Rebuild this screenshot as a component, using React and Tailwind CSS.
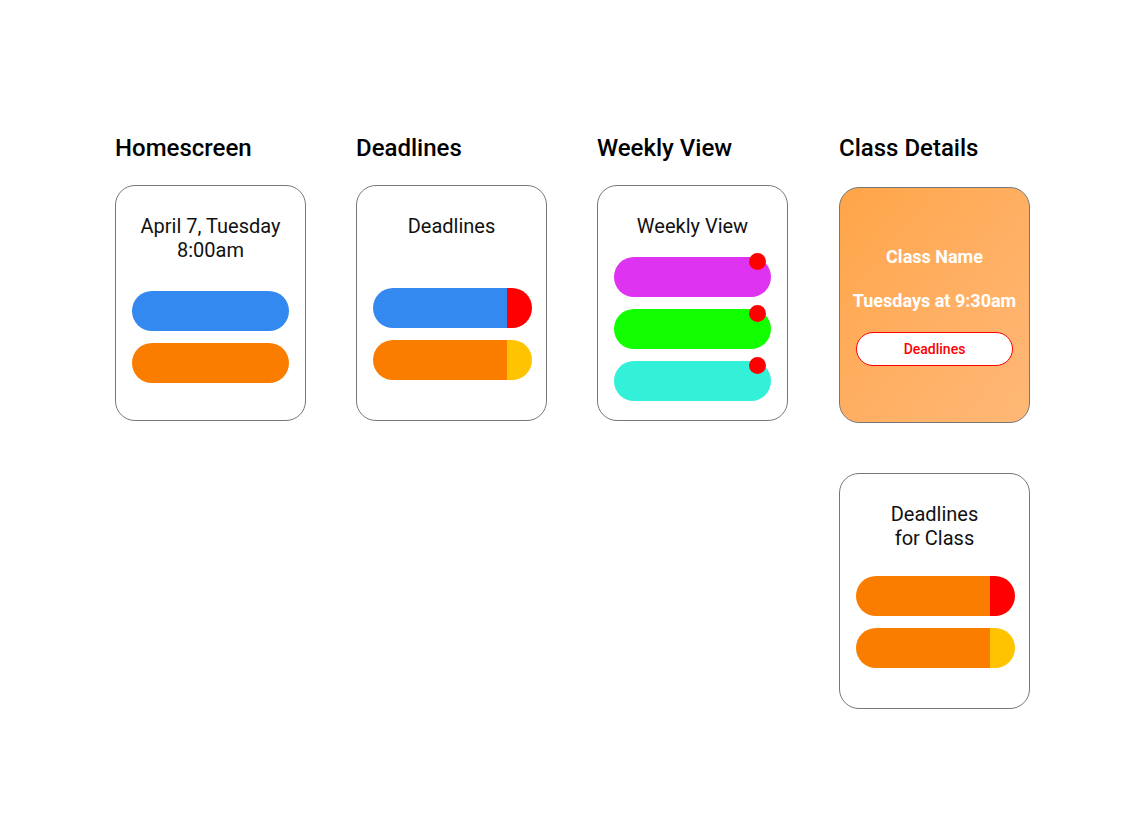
import React from "react";

const font = { fontFamily: "Roboto, 'Liberation Sans', sans-serif" };

function Heading({ children }) {
  return (
    <h2 className="text-[24px] font-medium leading-[28px] text-black h-[28px] mb-[23px] whitespace-nowrap">
      {children}
    </h2>
  );
}

function Card({ children, className = "" }) {
  return (
    <div
      className={`w-[191px] h-[236px] rounded-[20px] border border-[#777777] bg-white flex flex-col items-stretch pt-[28px] px-4 ${className}`}
    >
      {children}
    </div>
  );
}

function CardTitle({ children }) {
  return (
    <div className="text-center text-[20px] leading-[24px] text-[#111]">{children}</div>
  );
}

function SplitBar({ main, end }) {
  return (
    <div className="w-[159px] h-10 rounded-full overflow-hidden flex">
      <div className={`flex-1 h-full ${main}`} />
      <div className={`w-[25px] h-full ${end}`} />
    </div>
  );
}

function DotBar({ color }) {
  return (
    <div className={`relative w-[157px] h-10 rounded-full ${color}`}>
      <div className="absolute -top-[4px] right-[5px] w-[17px] h-[17px] rounded-full bg-[#ff0000]" />
    </div>
  );
}

export default function App() {
  return (
    <div className="w-[1144px] h-[840px] bg-white" style={font}>
      <div className="flex gap-[50px] pl-[115px] pt-[134px]">
        {/* Homescreen */}
        <div className="w-[191px]">
          <Heading>Homescreen</Heading>
          <Card>
            <CardTitle>
              April 7, Tuesday
              <br />
              8:00am
            </CardTitle>
            <div className="mt-[29px] flex flex-col gap-3">
              <div className="w-[157px] h-10 rounded-full bg-[#3489f0]" />
              <div className="w-[157px] h-10 rounded-full bg-[#fb7d00]" />
            </div>
          </Card>
        </div>

        {/* Deadlines */}
        <div className="w-[191px]">
          <Heading>Deadlines</Heading>
          <Card>
            <CardTitle>Deadlines</CardTitle>
            <div className="mt-[50px] flex flex-col gap-3">
              <SplitBar main="bg-[#3489f0]" end="bg-[#ff0000]" />
              <SplitBar main="bg-[#fb7d00]" end="bg-[#ffc300]" />
            </div>
          </Card>
        </div>

        {/* Weekly View */}
        <div className="w-[191px]">
          <Heading>Weekly View</Heading>
          <Card>
            <CardTitle>Weekly View</CardTitle>
            <div className="mt-[19px] flex flex-col gap-3">
              <DotBar color="bg-[#de33f0]" />
              <DotBar color="bg-[#12ff00]" />
              <DotBar color="bg-[#33f0d8]" />
            </div>
          </Card>
        </div>

        {/* Class Details */}
        <div className="w-[191px] ml-[1px] flex flex-col">
          <Heading>Class Details</Heading>
          <div className="mt-[2px] w-[191px] h-[236px] rounded-[20px] border border-[#777777] bg-gradient-to-br from-[#ffa548] to-[#ffb877] flex flex-col items-center pt-[57px]">
            <div className="text-white font-bold text-[18px] leading-[24px]">Class Name</div>
            <div className="mt-[20px] text-white font-bold text-[18px] leading-[24px] whitespace-nowrap">
              Tuesdays at 9:30am
            </div>
            <div className="mt-[19px] w-[157px] h-[34px] rounded-full bg-white border border-[#ff0000] flex items-center justify-center text-[#ff0000] text-[14px] font-medium">
              Deadlines
            </div>
          </div>
          <div className="mt-[50px]">
            <Card>
              <CardTitle>
                Deadlines
                <br />
                for Class
              </CardTitle>
              <div className="mt-[26px] flex flex-col gap-3">
                <SplitBar main="bg-[#fb7d00]" end="bg-[#ff0000]" />
                <SplitBar main="bg-[#fb7d00]" end="bg-[#ffc300]" />
              </div>
            </Card>
          </div>
        </div>
      </div>
    </div>
  );
}
